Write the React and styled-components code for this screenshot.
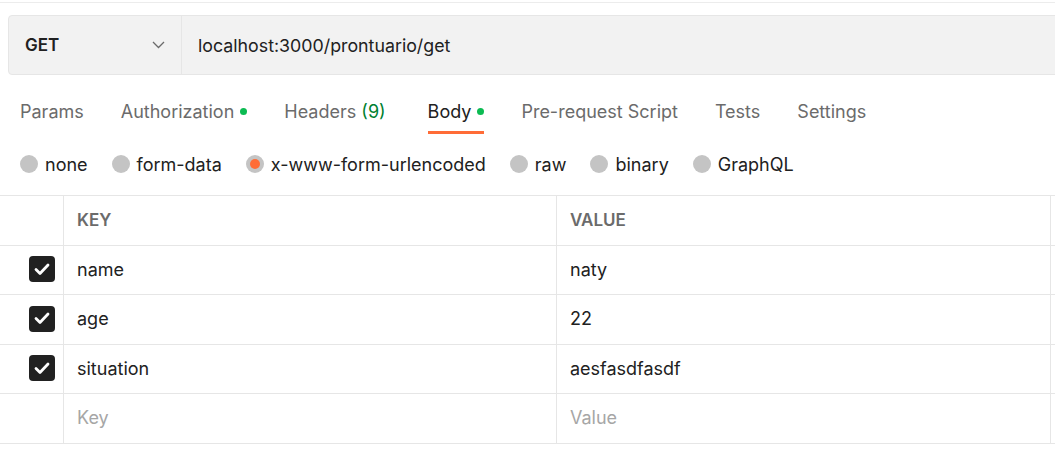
import React from 'react';
import styled, { createGlobalStyle } from 'styled-components';

const GlobalStyle = createGlobalStyle`
  html, body {
    margin: 0;
    padding: 0;
    background: #ffffff;
  }
  body {
    font-family: Inter, "Noto Sans", sans-serif;
    color: #212121;
    overflow: hidden;
  }
`;

const Page = styled.div`
  width: 1055px;
  height: 464px;
  overflow: hidden;
  border-top: 1px solid #ececec;
  margin-top: 2px;
  box-sizing: border-box;
`;

const UrlBar = styled.div`
  display: flex;
  height: 60px;
  width: 1060px;
  margin: 12px 0 0 8px;
  background: #f2f2f2;
  border: 1px solid #e6e6e6;
  border-radius: 4px 0 0 4px;
  box-sizing: border-box;
`;

const Method = styled.div`
  display: flex;
  align-items: center;
  justify-content: space-between;
  width: 173px;
  padding: 0 16px 0 16px;
  box-sizing: border-box;
  border-right: 1px solid #e6e6e6;
  font-size: 17px;
  font-weight: 600;
  color: #212121;
`;

const UrlText = styled.div`
  display: flex;
  align-items: center;
  padding-left: 16px;
  font-size: 17.8px;
  color: #212121;
`;

const Tabs = styled.div`
  display: flex;
  gap: 37px;
  padding: 0 0 0 20px;
  margin-top: 14px;
`;

const Tab = styled.div`
  display: flex;
  align-items: center;
  gap: 6px;
  height: 45px;
  box-sizing: border-box;
  font-size: 18px;
  color: ${(p) => (p.active ? '#212121' : '#6b6b6b')};
  border-bottom: 3px solid ${(p) => (p.active ? '#ff6c37' : 'transparent')};
  padding-top: 2px;
  margin-right: ${(p) => p.extra || 0}px;
`;

const Dot = styled.span`
  width: 7px;
  height: 7px;
  border-radius: 50%;
  background: #0cbb52;
  margin-top: 1px;
`;

const Count = styled.span`
  color: #007f31;
`;

const Radios = styled.div`
  display: flex;
  align-items: center;
  gap: 24px;
  padding-left: 20px;
  height: 40px;
  margin-top: 10px;
`;

const RadioItem = styled.label`
  display: flex;
  align-items: center;
  gap: 7px;
  font-size: 18px;
  color: #212121;
`;

const Circle = styled.span`
  width: 18px;
  height: 18px;
  border-radius: 50%;
  background: #c4c4c4;
  display: flex;
  align-items: center;
  justify-content: center;

  &::after {
    content: '';
    display: ${(p) => (p.checked ? 'block' : 'none')};
    width: 10px;
    height: 10px;
    border-radius: 50%;
    background: #ff6c37;
  }
`;

const Table = styled.div`
  display: grid;
  grid-template-columns: 64px 493px 494px 4px;
  margin-top: 11px;
  border-top: 1px solid #e6e6e6;
`;

const Cell = styled.div`
  display: flex;
  align-items: center;
  height: ${(p) => p.h}px;
  box-sizing: border-box;
  border-bottom: 1px solid #e6e6e6;
  border-right: ${(p) => (p.last ? 'none' : '1px solid #e6e6e6')};
  padding-left: ${(p) => (p.check ? '0' : '13px')};
  justify-content: ${(p) => (p.check ? 'flex-end' : 'flex-start')};
  padding-right: ${(p) => (p.check ? '8px' : '0')};
  padding-bottom: 2px;
  font-size: ${(p) => (p.head ? '17px' : '18px')};
  font-weight: ${(p) => (p.head ? 600 : 400)};
  color: ${(p) => (p.head ? '#6b6b6b' : p.placeholder ? '#a6a6a6' : '#212121')};
`;

const Check = styled.span`
  width: 26px;
  height: 26px;
  border-radius: 4px;
  background: #212121;
  display: flex;
  align-items: center;
  justify-content: center;
`;

const Chevron = () => (
  <svg width="13" height="8" viewBox="0 0 13 8" fill="none">
    <path d="M1 1l5.5 5.5L12 1" stroke="#6b6b6b" strokeWidth="1.3" />
  </svg>
);

const CheckMark = () => (
  <svg width="16" height="13" viewBox="0 0 16 13" fill="none">
    <path d="M2 6.5l4 4L14 2" stroke="#fff" strokeWidth="2.8" strokeLinecap="round" strokeLinejoin="round" />
  </svg>
);

const rows = [
  { key: 'name', value: 'naty', h: 49 },
  { key: 'age', value: '22', h: 50 },
  { key: 'situation', value: 'aesfasdfasdf', h: 49 },
];

const bodyTypes = ['none', 'form-data', 'x-www-form-urlencoded', 'raw', 'binary', 'GraphQL'];

export default function App() {
  return (
    <>
      <GlobalStyle />
      <Page>
        <UrlBar>
          <Method>
            GET
            <Chevron />
          </Method>
          <UrlText>localhost:3000/prontuario/get</UrlText>
        </UrlBar>

        <Tabs>
          <Tab>Params</Tab>
          <Tab>
            Authorization <Dot />
          </Tab>
          <Tab extra={5}>
            <span>
              Headers <Count>(9)</Count>
            </span>
          </Tab>
          <Tab active>
            Body <Dot />
          </Tab>
          <Tab>Pre-request Script</Tab>
          <Tab>Tests</Tab>
          <Tab>Settings</Tab>
        </Tabs>

        <Radios>
          {bodyTypes.map((t) => (
            <RadioItem key={t}>
              <Circle checked={t === 'x-www-form-urlencoded'} />
              {t}
            </RadioItem>
          ))}
        </Radios>

        <Table>
          <Cell h={50} />
          <Cell h={50} head>KEY</Cell>
          <Cell h={50} head>VALUE</Cell>
          <Cell h={50} last />
          {rows.map((r) => (
            <React.Fragment key={r.key}>
              <Cell h={r.h} check>
                <Check>
                  <CheckMark />
                </Check>
              </Cell>
              <Cell h={r.h}>{r.key}</Cell>
              <Cell h={r.h}>{r.value}</Cell>
              <Cell h={r.h} last />
            </React.Fragment>
          ))}
          <Cell h={50} />
          <Cell h={50} placeholder>Key</Cell>
          <Cell h={50} placeholder>Value</Cell>
          <Cell h={50} last />
        </Table>
      </Page>
    </>
  );
}
